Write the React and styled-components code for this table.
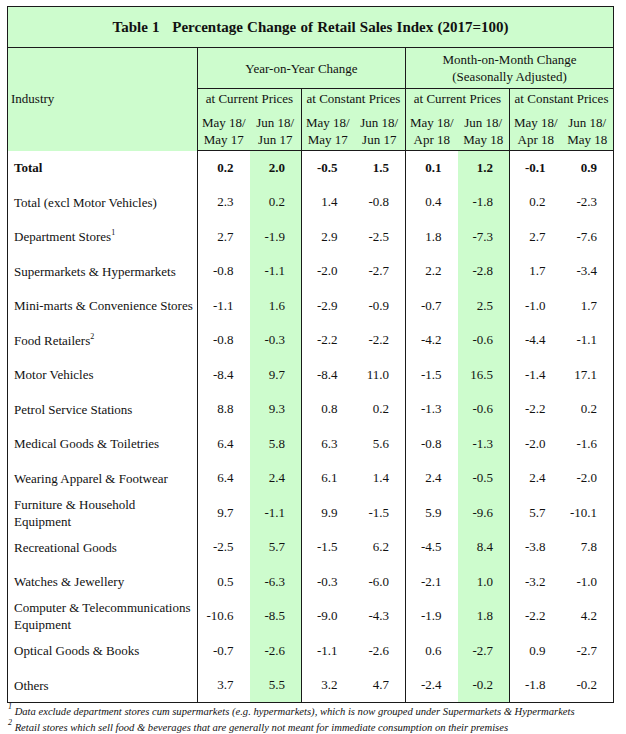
import React from 'react';
import styled, { createGlobalStyle } from 'styled-components';

const GREEN = '#cdfccd';
const LINE = '1px solid #1a1a1a';

const GlobalStyle = createGlobalStyle`
  body {
    margin: 0;
    background: #ffffff;
    font-family: "Liberation Serif", "Times New Roman", serif;
    color: #111;
  }
`;

// rows: industry name, 8 values; an array name wraps to two lines
const rows = [
  { name: 'Total (excl Motor Vehicles)', v: ['2.3', '0.2', '1.4', '-0.8', '0.4', '-1.8', '0.2', '-2.3'] },
  { name: 'Department Stores', note: '1', v: ['2.7', '-1.9', '2.9', '-2.5', '1.8', '-7.3', '2.7', '-7.6'] },
  { name: 'Supermarkets & Hypermarkets', v: ['-0.8', '-1.1', '-2.0', '-2.7', '2.2', '-2.8', '1.7', '-3.4'] },
  { name: 'Mini-marts & Convenience Stores', v: ['-1.1', '1.6', '-2.9', '-0.9', '-0.7', '2.5', '-1.0', '1.7'] },
  { name: 'Food Retailers', note: '2', v: ['-0.8', '-0.3', '-2.2', '-2.2', '-4.2', '-0.6', '-4.4', '-1.1'] },
  { name: 'Motor Vehicles', v: ['-8.4', '9.7', '-8.4', '11.0', '-1.5', '16.5', '-1.4', '17.1'] },
  { name: 'Petrol Service Stations', v: ['8.8', '9.3', '0.8', '0.2', '-1.3', '-0.6', '-2.2', '0.2'] },
  { name: 'Medical Goods & Toiletries', v: ['6.4', '5.8', '6.3', '5.6', '-0.8', '-1.3', '-2.0', '-1.6'] },
  { name: 'Wearing Apparel & Footwear', v: ['6.4', '2.4', '6.1', '1.4', '2.4', '-0.5', '2.4', '-2.0'] },
  { name: ['Furniture & Household', 'Equipment'], v: ['9.7', '-1.1', '9.9', '-1.5', '5.9', '-9.6', '5.7', '-10.1'] },
  { name: 'Recreational Goods', v: ['-2.5', '5.7', '-1.5', '6.2', '-4.5', '8.4', '-3.8', '7.8'] },
  { name: 'Watches & Jewellery', v: ['0.5', '-6.3', '-0.3', '-6.0', '-2.1', '1.0', '-3.2', '-1.0'] },
  { name: ['Computer & Telecommunications', 'Equipment'], v: ['-10.6', '-8.5', '-9.0', '-4.3', '-1.9', '1.8', '-2.2', '4.2'] },
  { name: 'Optical Goods & Books', v: ['-0.7', '-2.6', '-1.1', '-2.6', '0.6', '-2.7', '0.9', '-2.7'] },
  { name: 'Others', v: ['3.7', '5.5', '3.2', '4.7', '-2.4', '-0.2', '-1.8', '-0.2'] },
];

const total = ['0.2', '2.0', '-0.5', '1.5', '0.1', '1.2', '-0.1', '0.9'];

const periods = [
  ['May 18/', 'May 17'], ['Jun 18/', 'Jun 17'],
  ['May 18/', 'May 17'], ['Jun 18/', 'Jun 17'],
  ['May 18/', 'Apr 18'], ['Jun 18/', 'May 18'],
  ['May 18/', 'Apr 18'], ['Jun 18/', 'May 18'],
];

const Page = styled.div`
  padding: 6px 0 0 7px;
`;

const Table = styled.table`
  width: 607px;
  table-layout: fixed;
  border-collapse: collapse;
  border: ${LINE};
  font-size: 13px;
`;

const HeadRow = styled.tr`
  height: ${(p) => p.$h};
`;

const TitleCell = styled.th`
  background: ${GREEN};
  padding: 0;
  font-size: 15px;
  font-weight: bold;
  text-align: center;
  border-bottom: ${LINE};
  word-spacing: 0.5px;
`;

const HeadCell = styled.th`
  background: ${GREEN};
  font-weight: normal;
  text-align: ${(p) => (p.$left ? 'left' : 'center')};
  padding: ${(p) => p.$pad || '0'};
  line-height: 17px;
  vertical-align: ${(p) => p.$valign || 'middle'};
  border-left: ${(p) => (p.$divider ? LINE : 'none')};
  border-bottom: ${(p) => (p.$under ? LINE : 'none')};
  white-space: nowrap;
`;

const Row = styled.tr`
  height: 34.5px;
`;

const NameCell = styled.td`
  padding: 0 0 0 6px;
  line-height: 17px;
  font-weight: ${(p) => (p.$bold ? 'bold' : 'normal')};
  white-space: nowrap;
  border-right: ${LINE};
`;

const ValueCell = styled.td`
  text-align: right;
  padding: 0 16px 0 0;
  font-weight: ${(p) => (p.$bold ? 'bold' : 'normal')};
  background: ${(p) => (p.$shaded ? GREEN : 'transparent')};
  border-right: ${(p) => (p.$divider ? LINE : 'none')};
`;

const Sup = styled.sup`
  font-size: 8px;
  vertical-align: 6px;
  line-height: 0;
`;

const Notes = styled.div`
  font-size: 10.6px;
  font-style: italic;
  line-height: 16px;
  padding: 1px 0 0 1px;
`;

const shaded = (i) => i === 1 || i === 5;
const divider = (i) => i % 2 === 1;

const Values = ({ v, bold }) =>
  v.map((x, i) => (
    <ValueCell key={i} $bold={bold} $shaded={shaded(i)} $divider={divider(i)}>
      {x}
    </ValueCell>
  ));

const App = () => (
  <Page>
    <GlobalStyle />
    <Table>
      <colgroup>
        <col style={{ width: 190 }} />
        {periods.map((_, i) => (
          <col key={i} style={{ width: 52 }} />
        ))}
      </colgroup>
      <thead>
        <HeadRow $h="41px">
          <TitleCell colSpan={9}>Table 1&nbsp;&nbsp; Percentage Change of Retail Sales Index (2017=100)</TitleCell>
        </HeadRow>
        <HeadRow $h="41px">
          <HeadCell rowSpan={3} $left $pad="0 0 2px 3px">Industry</HeadCell>
          <HeadCell colSpan={4} $divider $under>Year-on-Year Change</HeadCell>
          <HeadCell colSpan={4} $divider $under>
            Month-on-Month Change<br />(Seasonally Adjusted)
          </HeadCell>
        </HeadRow>
        <HeadRow $h="20px">
          {[0, 1, 2, 3].map((i) => (
            <HeadCell key={i} colSpan={2} $divider>
              {i % 2 === 0 ? 'at Current Prices' : 'at Constant Prices'}
            </HeadCell>
          ))}
        </HeadRow>
        <HeadRow $h="42px">
          {periods.map((p, i) => (
            <HeadCell key={i} $divider={i % 2 === 0} $under $pad="3px 0 0 0">
              {p[0]}<br />{p[1]}
            </HeadCell>
          ))}
        </HeadRow>
      </thead>
      <tbody>
        <Row>
          <NameCell $bold>Total</NameCell>
          <Values v={total} bold />
        </Row>
        {rows.map((r) => (
          <Row key={Array.isArray(r.name) ? r.name[0] : r.name}>
            <NameCell>
              {Array.isArray(r.name) ? (
                <>{r.name[0]}<br />{r.name[1]}</>
              ) : (
                r.name
              )}
              {r.note && <Sup>{r.note}</Sup>}
            </NameCell>
            <Values v={r.v} />
          </Row>
        ))}
      </tbody>
    </Table>
    <Notes>
      <div><Sup>1</Sup> Data exclude department stores cum supermarkets (e.g. hypermarkets), which is now grouped under Supermarkets &amp; Hypermarkets</div>
      <div><Sup>2</Sup> Retail stores which sell food &amp; beverages that are generally not meant for immediate consumption on their premises</div>
    </Notes>
  </Page>
);

export default App;
